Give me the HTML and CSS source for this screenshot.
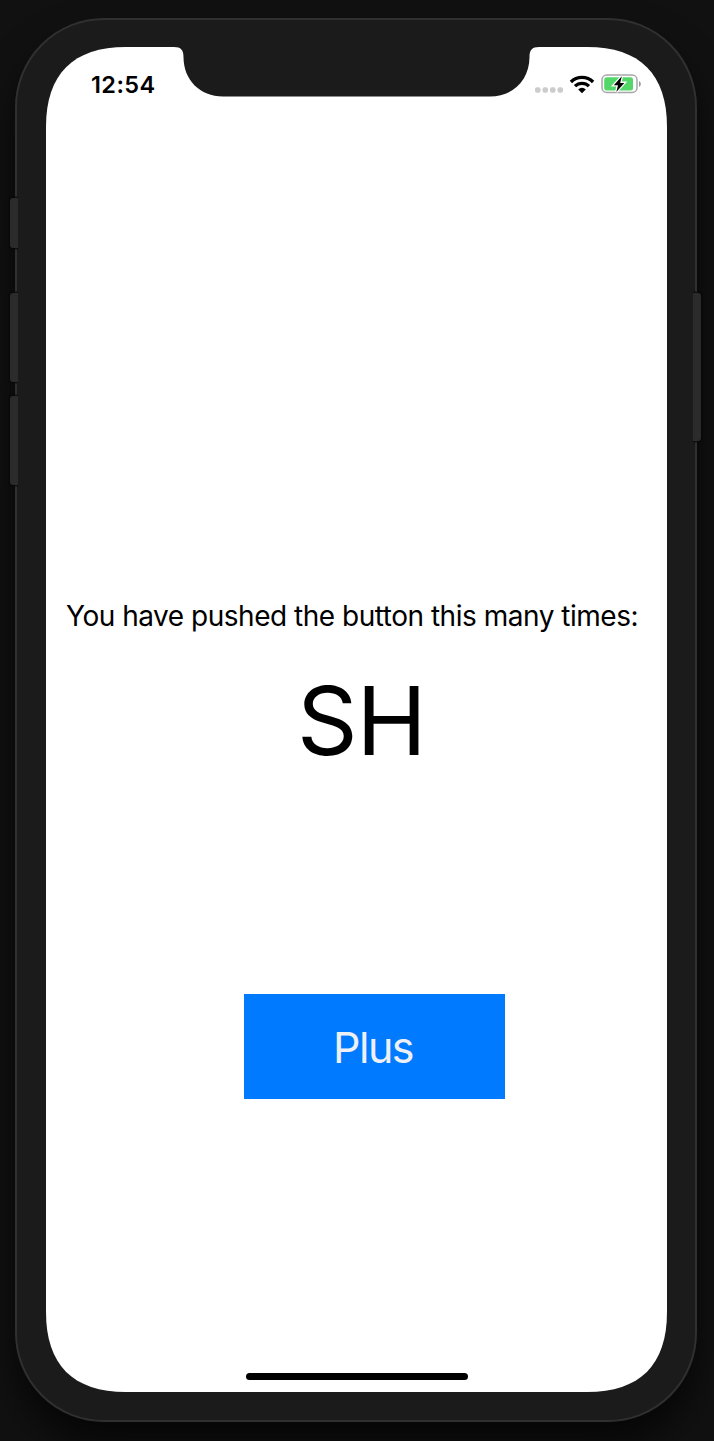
FILE: index.html
```html
<!DOCTYPE html>
<html lang="en">
<head>
<meta charset="utf-8">
<title>Counter</title>
<link rel="stylesheet" href="styles.css">
</head>
<body>
<div class="stage">
  <div class="phone">
    <i class="key key-mute"></i>
    <i class="key key-up"></i>
    <i class="key key-down"></i>
    <i class="key key-power"></i>
    <div class="screen">
      <svg class="notch" width="365" height="50" viewBox="0 0 365 50"><path d="M0 0C7 0 9.500 3 9.500 10C9.500 33 26 49.500 49 49.500H316C339 49.500 355.500 33 355.500 10C355.500 3 358 0 365 0Z" fill="#1b1b1b"/></svg>
      <header class="status">
        <span class="time">12:54</span>
        <div class="indicators">
          <svg class="dots" width="29" height="6" viewBox="0 0 29 6" fill="#ccc">
            <rect x="0" y=".3" width="5.500" height="5.500" rx="2"/>
            <rect x="7.500" y=".3" width="5.500" height="5.500" rx="2"/>
            <rect x="15" y=".3" width="5.500" height="5.500" rx="2"/>
            <rect x="22.500" y=".3" width="5.500" height="5.500" rx="2"/>
          </svg>
          <svg class="wifi" width="26" height="20" viewBox="0 0 26 20">
            <g fill="none" stroke="#000" stroke-width="3.300">
              <path d="M1.900 8A15.700 15.700 0 0 1 24.100 8"/>
              <path d="M6 12.200A9.900 9.900 0 0 1 20 12.200"/>
            </g>
            <path d="M9.200 15.400A5.300 5.300 0 0 1 16.800 15.400L13 19.200Z"/>
          </svg>
          <svg class="battery" width="41" height="22" viewBox="0 0 41 22">
            <rect x="1" y="2" width="35" height="17.500" rx="4.800" fill="none" stroke="#a6a6a6" stroke-width="1.500"/>
            <path d="M38 8Q39.900 8.800 39.900 11Q39.900 13.200 38 14Z" fill="#999"/>
            <rect x="3.200" y="4.200" width="28.800" height="13.200" rx="2.500" fill="#53d769"/>
            <path d="M20.800 3.300L12.800 12.200H17L15.300 18.900L23.300 9.900H19.200Z" fill="#000" stroke="#fff" stroke-width="2.600" paint-order="stroke"/>
          </svg>
        </div>
      </header>
      <main class="content">
        <p class="message">You have pushed the button this many times:</p>
        <p class="value">SH</p>
        <button class="plus">Plus</button>
      </main>
      <div class="home-bar"></div>
    </div>
  </div>
</div>
</body>
</html>
```
FILE: styles.css
```css
* { box-sizing: border-box; }
body {
  margin: 0;
  background: #111;
  font-family: Inter, "Liberation Sans", sans-serif;
  color: #000;
}
.stage {
  width: 714px;
  height: 1441px;
  padding: 18px 17px 19px 15px;
  overflow: hidden;
}
.phone {
  position: relative;
  height: 1404px;
  padding: 27px 28px 28px 29px;
  border: 2px solid #303030;
  border-radius: 89px;
  background: #1b1b1b;
  box-shadow: 0 22px 36px rgba(0, 0, 0, .65);
}
.key {
  position: absolute;
  left: -7px;
  width: 8px;
  background: #2b2b2b;
  border-radius: 3px 0 0 3px;
  box-shadow: 0 0 2px 1px #080808;
  clip-path: inset(-3px 0 -3px -3px);
}
.key-mute { top: 178px; height: 50px; }
.key-up { top: 273px; height: 89px; }
.key-down { top: 376px; height: 89px; }
.key-power {
  left: auto;
  right: -6px;
  top: 273px;
  height: 148px;
  border-radius: 0 3px 3px 0;
  clip-path: inset(-3px -3px -3px 0);
}
.screen {
  position: relative;
  display: flex;
  flex-direction: column;
  width: 621px;
  height: 1345px;
  background: #fff;
  clip-path: path("M0 80C0 27 27 0 80 0H541C594 0 621 27 621 80V1265C621 1318 594 1345 541 1345H80C27 1345 0 1318 0 1265Z");
}
.notch {
  position: absolute;
  left: 128px;
  top: 0;
}
.status {
  display: flex;
  justify-content: space-between;
  height: 76px;
  padding: 22px 25px 0 45px;
}
.time {
  font-size: 23.500px;
  line-height: 31px;
  font-weight: 600;
  letter-spacing: .4px;
}
.indicators {
  display: flex;
  height: 30px;
  align-items: center;
}
.dots { margin: 12px 5px 0 0; }
.wifi { margin-right: 6px; margin-top: -1px; }
.content {
  flex: 1;
  display: flex;
  flex-direction: column;
  align-items: flex-start;
}
.message {
  margin: 473px 0 0 20px;
  font-size: 28px;
  line-height: 40px;
  letter-spacing: -.48px;
  white-space: nowrap;
}
.value {
  margin: 30px 0 0 251px;
  font-size: 94.500px;
  line-height: 110px;
  letter-spacing: -1.200px;
}
.plus {
  width: 261px;
  height: 105px;
  margin: 218px 0 0 198px;
  padding: 2px 3px 0 0;
  border: 0;
  background: #007bff;
  color: #eef0f6;
  font: 400 43px/103px Inter, "Liberation Sans", sans-serif;
  letter-spacing: -1.500px;
}
.home-bar {
  width: 222px;
  height: 7.500px;
  margin: 0 0 12px 199.500px;
  border-radius: 4px;
  background: #000;
}
```
